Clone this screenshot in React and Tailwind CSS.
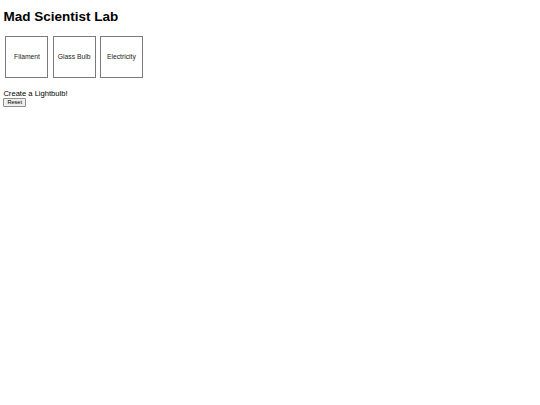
const items = ['Filament', 'Glass Bulb', 'Electricity']

export default function App() {
    return (
        <div className="min-h-[405px] bg-white px-[3.4px] pt-[9px] text-black font-['Liberation_Sans',Arial,sans-serif]">
            <h1 className="text-[13.5px] font-bold leading-[15.5px] mb-[9px]">Mad Scientist Lab</h1>

            <div className="flex">
                {items.map((item) => (
                    <div
                        key={item}
                        className="m-[2.1px] w-[43px] h-[42.5px] border border-[#7a7a7a] flex items-center justify-center text-[6.75px] text-[#222]"
                    >
                        {item}
                    </div>
                ))}
            </div>

            <div className="mt-[8.5px] text-[7.6px] leading-[9px]">Create a Lightbulb!</div>
            <button className="mt-[0.5px] px-[3px] h-[8.5px] flex items-center text-[5.6px] leading-none bg-[#efefef] border border-[#8f8f8f] rounded-[1px]">
                Reset
            </button>
        </div>
    )
}
